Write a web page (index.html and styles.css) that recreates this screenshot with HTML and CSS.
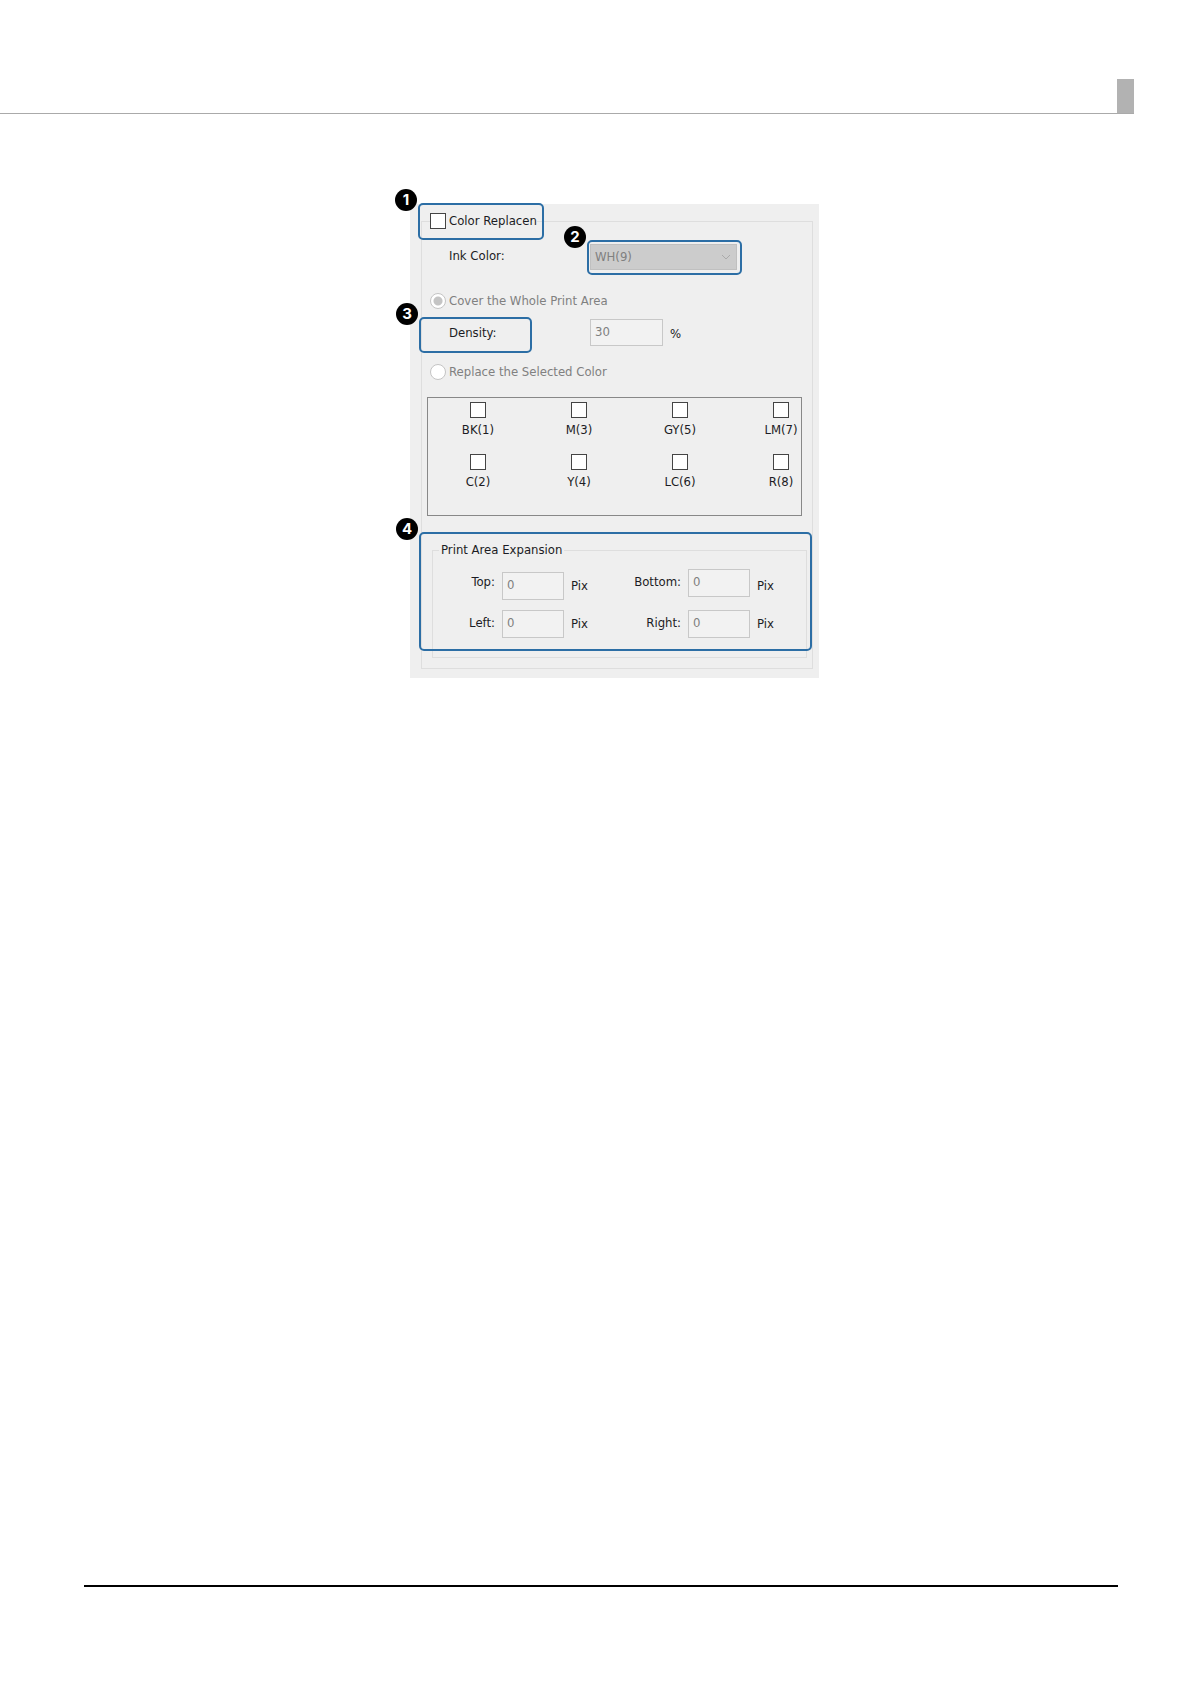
FILE: index.html
```html
<!DOCTYPE html>
<html lang="en">
  <head>
    <meta charset="UTF-8" />
    <meta name="viewport" content="width=device-width, initial-scale=1.0" />
    <title>Color Replacement</title>
    <link rel="stylesheet" href="styles.css">
  </head>
  <body>
    <header class="page-header">
      <div class="header-tab"></div>
    </header>

    <main class="content">
      <form class="panel">
        <fieldset class="group">
          <legend class="group-title">
            <label class="option">
              <input type="checkbox" class="check" />
              Color Replacen
            </label>
          </legend>

          <div class="row ink-row">
            <label for="ink-color">Ink Color:</label>
            <div class="select-wrap">
              <select id="ink-color" class="select" disabled>
                <option>WH(9)</option>
              </select>
              <svg class="arrow" viewBox="0 0 10 6">
                <path d="M1 1l4 4 4-4" />
              </svg>
            </div>
          </div>

          <label class="option disabled cover-option">
            <input type="radio" name="mode" class="radio" checked disabled />
            Cover the Whole Print Area
          </label>

          <div class="row density-row">
            <label for="density">Density:</label>
            <input type="text" id="density" class="field" value="30" disabled />
            <span class="percent">%</span>
          </div>

          <label class="option disabled replace-option">
            <input type="radio" name="mode" class="radio" disabled />
            Replace the Selected Color
          </label>

          <div class="colors">
            <label class="color"><input type="checkbox" class="check" />BK(1)</label>
            <label class="color"><input type="checkbox" class="check" />M(3)</label>
            <label class="color"><input type="checkbox" class="check" />GY(5)</label>
            <label class="color"><input type="checkbox" class="check" />LM(7)</label>
            <label class="color"><input type="checkbox" class="check" />C(2)</label>
            <label class="color"><input type="checkbox" class="check" />Y(4)</label>
            <label class="color"><input type="checkbox" class="check" />LC(6)</label>
            <label class="color"><input type="checkbox" class="check" />R(8)</label>
          </div>

          <fieldset class="expansion">
            <legend class="expansion-title">Print Area Expansion</legend>
            <div class="expansion-grid">
              <label class="side" for="top">Top:</label>
              <input type="text" id="top" class="field low" value="0" disabled />
              <span class="unit">Pix</span>
              <label class="side" for="bottom">Bottom:</label>
              <input type="text" id="bottom" class="field" value="0" disabled />
              <span class="unit">Pix</span>
              <label class="side" for="left">Left:</label>
              <input type="text" id="left" class="field" value="0" disabled />
              <span class="unit">Pix</span>
              <label class="side" for="right">Right:</label>
              <input type="text" id="right" class="field" value="0" disabled />
              <span class="unit">Pix</span>
            </div>
          </fieldset>
        </fieldset>

        <!-- Numbered callouts -->
        <div class="callout callout-title"><span class="badge">1</span></div>
        <div class="callout callout-ink"><span class="badge">2</span></div>
        <div class="callout callout-density"><span class="badge">3</span></div>
        <div class="callout callout-expansion"><span class="badge">4</span></div>
      </form>
    </main>

    <footer class="page-footer"></footer>
  </body>
</html>
```

FILE: styles.css
```css
* {
  box-sizing: border-box;
}

body {
  margin: 0;
  min-height: 100vh;
  display: flex;
  flex-direction: column;
  background-color: white;
  color: #1c1c24;
  font-family: "DejaVu Sans Condensed", "DejaVu Sans", sans-serif;
  font-size: 13px;
  line-height: 18px;
}

.page-header {
  display: flex;
  justify-content: flex-end;
  margin-top: 79px;
  margin-right: 56px;
  border-bottom: 1px solid #aaa;
}

.header-tab {
  width: 17px;
  height: 34px;
  background-color: #b2b2b2;
}

.content {
  flex: 1;
  display: flex;
  justify-content: center;
  align-items: flex-start;
  padding: 90px 72px 0 111px;
}

.page-footer {
  margin: 0 72px 97px 84px;
  border-bottom: 2px solid black;
}

.panel {
  position: relative;
  width: 100%;
  max-width: 409px;
  padding: 8px 6px 9px 11px;
  background-color: #efefef;
}

fieldset {
  min-width: 0;
  margin: 0;
  padding: 0;
  border: 1px solid #dedede;
}

.group {
  padding: 0 5px 10px;
}

.group-title {
  margin-left: 3px;
  padding: 0;
}

.option {
  display: flex;
  align-items: center;
  gap: 3px;
}

.disabled {
  color: #808080;
}

.check,
.radio {
  appearance: none;
  flex: none;
  width: 16px;
  height: 16px;
  margin: 0;
  border: 1px solid #444;
  background-color: white;
}

.radio {
  border-color: #c4c4c4;
  border-radius: 50%;
}

.radio:checked {
  background-image: radial-gradient(#c4c4c4 4px, white 5px);
}

.row {
  display: grid;
  grid-template-columns: 134px 73px 1fr;
  gap: 7px;
  align-items: center;
  padding-left: 22px;
}

.ink-row {
  grid-template-columns: 134px 147px;
  margin-top: 14px;
}

.ink-row label {
  padding-bottom: 3px;
}

.select-wrap {
  position: relative;
  height: 26px;
}

.select {
  appearance: none;
  width: 100%;
  height: 26px;
  padding: 0 4px;
  border: 1px solid #c0c0c0;
  border-radius: 0;
  background-color: #cccccc;
  color: #808080;
  font: inherit;
  opacity: 1;
}

.arrow {
  position: absolute;
  top: 10px;
  right: 6px;
  width: 10px;
  height: 6px;
  fill: none;
  stroke: #aaa;
}

.cover-option {
  margin: 22px 3px 9px;
}

.replace-option {
  margin: 17px 3px 16px;
}

.field {
  width: 100%;
  height: 28px;
  padding: 0 4px 3px;
  border: 1px solid #c8c8c8;
  background-color: #f2f2f2;
  color: #808080;
  font: inherit;
}

.density-row .field {
  height: 27px;
}

.percent {
  padding-top: 2px;
}

.colors {
  display: grid;
  grid-template-columns: repeat(4, 40px);
  justify-content: space-between;
  align-content: start;
  row-gap: 15px;
  height: 119px;
  margin-right: 5px;
  padding: 4px 0 0 30px;
  border: 1px solid #888;
}

.color {
  display: flex;
  flex-direction: column;
  align-items: center;
  gap: 3px;
  white-space: nowrap;
}

.expansion {
  margin: 25px 0 0 5px;
}

.expansion-title {
  margin-left: 6px;
  padding: 0 2px;
}

.expansion-grid {
  display: grid;
  grid-template-columns: 62px 62px 28px 75px 62px 28px;
  grid-template-rows: 31px 28px;
  gap: 10px 7px;
  padding: 10px 0 19px;
}

.side {
  line-height: 26px;
  text-align: right;
}

.low {
  align-self: end;
}

.unit {
  align-self: end;
  line-height: 28px;
}

.callout {
  position: absolute;
  border: 2px solid #2c6ea5;
  border-radius: 5px;
  pointer-events: none;
}

.callout-title {
  top: -1px;
  left: 8px;
  width: 126px;
  height: 37px;
}

.callout-ink {
  top: 36px;
  left: 177px;
  width: 155px;
  height: 35px;
}

.callout-density {
  top: 113px;
  left: 9px;
  width: 113px;
  height: 36px;
}

.callout-expansion {
  top: 328px;
  left: 9px;
  width: 393px;
  height: 119px;
}

.badge {
  position: absolute;
  top: -16px;
  left: -25px;
  width: 22px;
  height: 22px;
  border-radius: 50%;
  background-color: black;
  color: white;
  font-family: Inter, sans-serif;
  font-size: 15px;
  font-weight: bold;
  line-height: 22px;
  text-align: center;
}
```
